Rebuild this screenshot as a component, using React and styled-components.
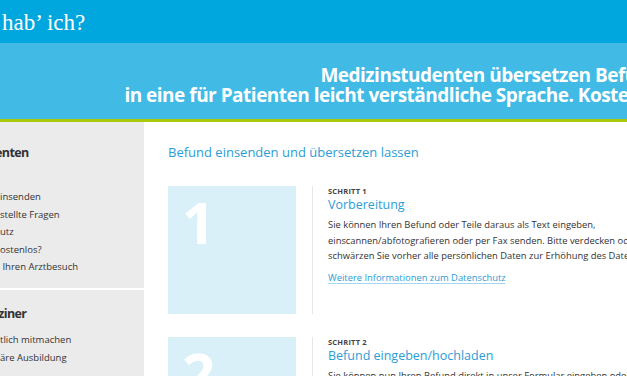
import React from "react";
import styled, { createGlobalStyle } from "styled-components";

const GlobalStyle = createGlobalStyle`
  html, body { margin: 0; padding: 0; overflow: hidden; background: #fff; }
  body { font-family: "Open Sans", "DejaVu Sans", sans-serif; color: #333; }
  * { box-sizing: border-box; }
`;

const Page = styled.div`
  width: 627px;
  height: 376px;
  overflow: hidden;
  display: flex;
  flex-direction: column;
`;

const TopBar = styled.header`
  height: 43px;
  flex-shrink: 0;
  background: #00a6de;
  display: flex;
  align-items: center;
  padding-left: 2px;
`;

const Logo = styled.div`
  font-family: "Liberation Serif", "Times New Roman", serif;
  font-size: 23px;
  color: #fff;
  line-height: 1;
  margin-top: 1px;
`;

const Band = styled.div`
  height: 79px;
  flex-shrink: 0;
  background: #41bbe6;
  border-bottom: 3px solid #abc90a;
  overflow: hidden;
  display: flex;
`;

const Claim = styled.p`
  margin: 0;
  flex: 0 0 671px;
  padding-top: 22px;
  text-align: right;
  color: #fff;
  font-weight: 700;
  font-size: 19px;
  letter-spacing: -0.5px;
  line-height: 20px;
  white-space: nowrap;
`;

const Body = styled.div`
  flex: 1;
  display: flex;
  min-height: 0;
`;

const Sidebar = styled.aside`
  width: 144px;
  flex-shrink: 0;
  background: #ebebeb;
  display: flex;
  flex-direction: column;
  overflow: hidden;
`;

const SideSection = styled.section`
  padding: ${(p) => p.$pt}px 0 ${(p) => p.$pb}px 0;
  border-bottom: ${(p) => (p.$divider ? "2px solid #fff" : "none")};
`;

const SideHeading = styled.h3`
  margin: 0 0 0 -5px;
  font-size: 12.5px;
  font-weight: 700;
  letter-spacing: -0.6px;
  line-height: 18px;
  color: #333;
  white-space: nowrap;
`;

const SideList = styled.ul`
  list-style: none;
  margin: ${(p) => p.$mt}px 0 0 0;
  padding: 0;
`;

const SideItem = styled.li`
  font-size: 9.5px;
  line-height: 17.5px;
  color: #333;
  white-space: pre;
`;

const Main = styled.main`
  flex: 1;
  padding: 21px 0 0 24px;
  overflow: hidden;
`;

const MainHeading = styled.h2`
  margin: 0 0 25px 0;
  font-size: 13px;
  font-weight: 400;
  line-height: 18px;
  color: #2b9dd5;
  white-space: nowrap;
`;

const Step = styled.div`
  display: flex;
  margin-bottom: 23px;
`;

const NumberBox = styled.div`
  width: 128px;
  height: 128px;
  flex-shrink: 0;
  background: #d9f0f9;
  color: #fff;
  font-weight: 700;
  font-size: 58px;
  line-height: 58px;
  padding: 7px 0 0 14px;
`;

const StepBody = styled.div`
  margin-left: 16px;
  border-left: 1px solid #e6e6e6;
  padding-left: 15px;
  width: 372px;
  flex-shrink: 0;
  height: 128px;
`;

const StepLabel = styled.div`
  font-size: 7.5px;
  font-weight: 700;
  line-height: 10px;
  letter-spacing: 0.2px;
  color: #444;
  text-transform: uppercase;
`;

const StepTitle = styled.h4`
  margin: 0;
  font-size: 12.5px;
  font-weight: 400;
  line-height: 17px;
  color: #2b9dd5;
`;

const StepText = styled.p`
  margin: 4px 0 0 0;
  font-size: 9.4px;
  line-height: 15.5px;
  color: #333;
`;

const MoreLink = styled.a`
  display: inline-block;
  margin-top: 2px;
  font-size: 9.4px;
  line-height: 15.5px;
  color: #2b9dd5;
  text-decoration: underline;
  text-decoration-color: #a6d8ef;
  text-underline-offset: 2px;
`;

const sections = [
  {
    title: "enten",
    pt: 22,
    pb: 12.5,
    listMt: 26,
    divider: true,
    items: ["insenden", "stellte Fragen", "utz", "ostenlos?", " Ihren Arztbesuch"],
  },
  {
    title: "iziner",
    pt: 15,
    pb: 0,
    listMt: 8,
    divider: false,
    items: ["tlich mitmachen", "äre Ausbildung"],
  },
];

const steps = [
  {
    n: "1",
    title: "Vorbereitung",
    text: "Sie können Ihren Befund oder Teile daraus als Text eingeben, einscannen/abfotografieren oder per Fax senden. Bitte verdecken oder schwärzen Sie vorher alle persönlichen Daten zur Erhöhung des Datenschutzes.",
    link: "Weitere Informationen zum Datenschutz",
  },
  {
    n: "2",
    title: "Befund eingeben/hochladen",
    text: (
      <>
        Sie können nun Ihren Befund direkt in unser Formular eingeben oder bis zu <b>10 DIN A4</b> Seiten hochladen.
      </>
    ),
  },
];

export default function App() {
  return (
    <>
      <GlobalStyle />
      <Page>
        <TopBar>
          <Logo>hab’ ich?</Logo>
        </TopBar>
        <Band>
          <Claim>
            Medizinstudenten übersetzen Befunde
            <br />
            in eine für Patienten leicht verständliche Sprache. Kostenlos.
          </Claim>
        </Band>
        <Body>
          <Sidebar>
            {sections.map((s) => (
              <SideSection key={s.title} $pt={s.pt} $pb={s.pb} $divider={s.divider}>
                <SideHeading>{s.title}</SideHeading>
                <SideList $mt={s.listMt}>
                  {s.items.map((it) => (
                    <SideItem key={it}>{it}</SideItem>
                  ))}
                </SideList>
              </SideSection>
            ))}
          </Sidebar>
          <Main>
            <MainHeading>Befund einsenden und übersetzen lassen</MainHeading>
            {steps.map((st) => (
              <Step key={st.n}>
                <NumberBox>{st.n}</NumberBox>
                <StepBody>
                  <StepLabel>Schritt {st.n}</StepLabel>
                  <StepTitle>{st.title}</StepTitle>
                  <StepText>{st.text}</StepText>
                  {st.link && <MoreLink href="#">{st.link}</MoreLink>}
                </StepBody>
              </Step>
            ))}
          </Main>
        </Body>
      </Page>
    </>
  );
}
